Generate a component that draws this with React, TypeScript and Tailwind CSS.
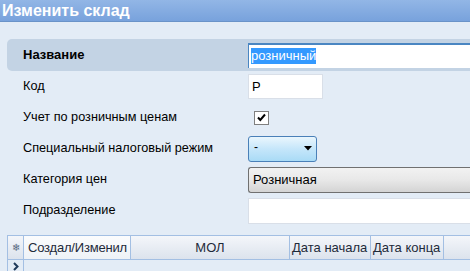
import React from "react";

export default function App() {
  const arial = { fontFamily: "'Liberation Sans', Arial, sans-serif" };
  return (
    <div
      className="w-[470px] h-[271px] overflow-hidden bg-[#e3ecf6] flex flex-col"
      style={arial}
    >
      <div className="h-[22px] shrink-0 bg-gradient-to-b from-[#92b6e6] to-[#78a2dc] border-b border-[#6a93c8] flex items-center pl-[2px]">
        <span className="text-white font-bold text-[16px] leading-none">Изменить склад</span>
      </div>
      <div className="h-[17px] shrink-0" />
      {/* Name row */}
      <div className="ml-[7px] h-[32px] shrink-0 bg-[#c3d3e4] rounded-l-[5px] flex items-center">
        <div className="w-[241px] pl-[16px] text-[13px] font-bold text-black">Название</div>
        <div className="flex-1 h-[25px] bg-white border-t-2 border-l border-[#4a86c2] flex items-center pl-[2px]">
          <span className="bg-[#3399ff] text-white text-[13px] leading-[16px]">розничный</span>
        </div>
      </div>
      {/* Код */}
      <div className="h-[31px] shrink-0 flex items-center">
        <div className="w-[248px] pl-[23px] text-[12.7px]">Код</div>
        <div className="w-[75px] h-[25px] bg-white border border-[#d9dfe8] flex items-center pl-[3px] text-[13px]">Р</div>
      </div>
      {/* Учет */}
      <div className="h-[31px] shrink-0 flex items-center">
        <div className="w-[254px] pl-[23px] text-[12.7px]">Учет по розничным ценам</div>
        <div className="w-[15px] h-[14px] bg-white border border-[#7f7f7f] flex items-center justify-center">
          <svg width="11" height="11" viewBox="0 0 11 11">
            <path d="M2 5.5 L4.3 8 L9 2.5" stroke="#000" strokeWidth="2" fill="none" />
          </svg>
        </div>
      </div>
      {/* Спец */}
      <div className="h-[31px] shrink-0 flex items-center">
        <div className="w-[248px] pl-[23px] text-[12.7px]">Специальный налоговый режим</div>
        <div className="w-[69px] h-[26px] rounded-[3px] border border-[#4a80b8] bg-gradient-to-b from-[#eaf6fd] via-[#c5e6fa] to-[#a9dbf6] flex items-center justify-between pl-[5px] pr-[4px]">
          <span className="text-[12px] leading-none -mt-[4px]">-</span>
          <svg width="8" height="5" viewBox="0 0 8 5"><path d="M0 0 L8 0 L4 4.5 Z" fill="#000" /></svg>
        </div>
      </div>
      {/* Категория */}
      <div className="h-[31px] shrink-0 flex items-center">
        <div className="w-[248px] pl-[23px] text-[12.7px]">Категория цен</div>
        <div className="flex-1 h-[26px] rounded-l-[3px] border border-r-0 border-[#707070] bg-gradient-to-b from-[#f2f2f2] via-[#e8e8e8] to-[#d4d4d4] flex items-center pl-[4px] text-[13px]">Розничная</div>
      </div>
      {/* Подразделение */}
      <div className="h-[31px] shrink-0 flex items-center">
        <div className="w-[248px] pl-[23px] text-[12.7px]">Подразделение</div>
        <div className="flex-1 h-[26px] bg-white border border-r-0 border-[#d9dfe8]" />
      </div>
      <div className="h-[9px] shrink-0" />
      {/* Grid */}
      <div className="ml-[7px] flex-1 border-l border-t border-[#a3bfe3] flex flex-col">
        <div className="h-[24px] flex border-b border-[#a3bfe3] bg-gradient-to-b from-[#f4f6fa] to-[#dce3ed] text-[13px] text-[#1e2a3a]">
          <div className="w-[16px] border-r border-[#a3bfe3] flex items-center justify-center text-[10px] text-[#5a6a80]">❄</div>
          <div className="w-[107px] border-r border-[#a3bfe3] bg-gradient-to-b from-[#fbfcfd] to-[#eef2f7] flex items-center pl-[4px] tracking-[-0.2px] whitespace-nowrap overflow-hidden">Создал/Изменил</div>
          <div className="w-[159px] border-r border-[#a3bfe3] flex items-center justify-center">МОЛ</div>
          <div className="w-[81px] border-r border-[#a3bfe3] flex items-center pl-[2px]">Дата начала</div>
          <div className="w-[73px] border-r border-[#a3bfe3] flex items-center pl-[2px]">Дата конца</div>
          <div className="flex-1" />
        </div>
        <div className="flex flex-1">
          <div className="w-[16px] border-r border-[#a3bfe3] flex items-start justify-center pt-[2px]">
            <svg width="6" height="9" viewBox="0 0 6 9"><path d="M1 1 L4.5 4.5 L1 8" stroke="#1f3a5a" strokeWidth="2" fill="none" /></svg>
          </div>
        </div>
      </div>
    </div>
  );
}
